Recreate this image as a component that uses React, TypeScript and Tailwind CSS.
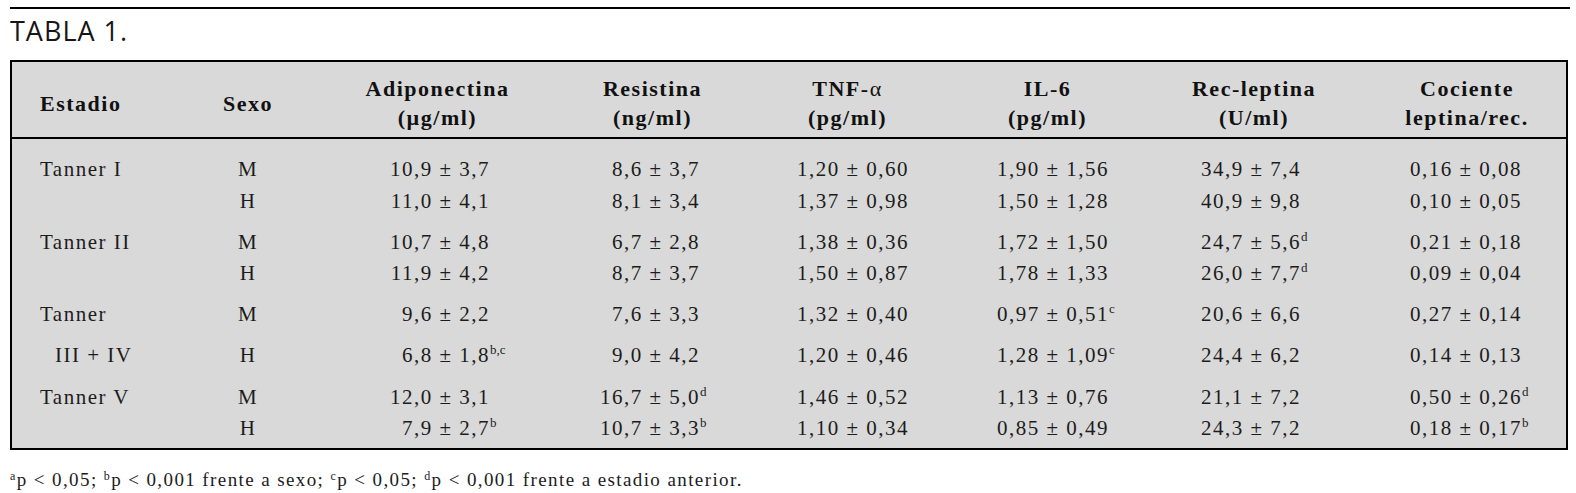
import React from "react";

type Val = { v: string; sup?: string };

const rows: {
  stage: string;
  indent?: boolean;
  sex: string;
  gap: string;
  vals: Val[];
}[] = [
  {
    stage: "Tanner I",
    sex: "M",
    gap: "mt-0",
    vals: [
      { v: "10,9 ± 3,7" },
      { v: "8,6 ± 3,7" },
      { v: "1,20 ± 0,60" },
      { v: "1,90 ± 1,56" },
      { v: "34,9 ± 7,4" },
      { v: "0,16 ± 0,08" },
    ],
  },
  {
    stage: "",
    sex: "H",
    gap: "mt-[1px]",
    vals: [
      { v: "11,0 ± 4,1" },
      { v: "8,1 ± 3,4" },
      { v: "1,37 ± 0,98" },
      { v: "1,50 ± 1,28" },
      { v: "40,9 ± 9,8" },
      { v: "0,10 ± 0,05" },
    ],
  },
  {
    stage: "Tanner II",
    sex: "M",
    gap: "mt-[10px]",
    vals: [
      { v: "10,7 ± 4,8" },
      { v: "6,7 ± 2,8" },
      { v: "1,38 ± 0,36" },
      { v: "1,72 ± 1,50" },
      { v: "24,7 ± 5,6", sup: "d" },
      { v: "0,21 ± 0,18" },
    ],
  },
  {
    stage: "",
    sex: "H",
    gap: "mt-0",
    vals: [
      { v: "11,9 ± 4,2" },
      { v: "8,7 ± 3,7" },
      { v: "1,50 ± 0,87" },
      { v: "1,78 ± 1,33" },
      { v: "26,0 ± 7,7", sup: "d" },
      { v: "0,09 ± 0,04" },
    ],
  },
  {
    stage: "Tanner",
    sex: "M",
    gap: "mt-[10px]",
    vals: [
      { v: "9,6 ± 2,2" },
      { v: "7,6 ± 3,3" },
      { v: "1,32 ± 0,40" },
      { v: "0,97 ± 0,51", sup: "c" },
      { v: "20,6 ± 6,6" },
      { v: "0,27 ± 0,14" },
    ],
  },
  {
    stage: "III + IV",
    indent: true,
    sex: "H",
    gap: "mt-[10px]",
    vals: [
      { v: "6,8 ± 1,8", sup: "b,c" },
      { v: "9,0 ± 4,2" },
      { v: "1,20 ± 0,46" },
      { v: "1,28 ± 1,09", sup: "c" },
      { v: "24,4 ± 6,2" },
      { v: "0,14 ± 0,13" },
    ],
  },
  {
    stage: "Tanner V",
    sex: "M",
    gap: "mt-[11px]",
    vals: [
      { v: "12,0 ± 3,1" },
      { v: "16,7 ± 5,0", sup: "d" },
      { v: "1,46 ± 0,52" },
      { v: "1,13 ± 0,76" },
      { v: "21,1 ± 7,2" },
      { v: "0,50 ± 0,26", sup: "d" },
    ],
  },
  {
    stage: "",
    sex: "H",
    gap: "mt-0",
    vals: [
      { v: "7,9 ± 2,7", sup: "b" },
      { v: "10,7 ± 3,3", sup: "b" },
      { v: "1,10 ± 0,34" },
      { v: "0,85 ± 0,49" },
      { v: "24,3 ± 7,2" },
      { v: "0,18 ± 0,17", sup: "b" },
    ],
  },
];

// right padding of each value column, so the values line up on the right
const valPad = ["pr-[55px]", "pr-[60px]", "pr-[26px]", "pr-[51px]", "pr-[47px]", "pr-[44px]"];

const heads: { l1: React.ReactNode; l2: React.ReactNode; cls: string }[] = [
  { l1: "Adiponectina", l2: "(µg/ml)", cls: "" },
  { l1: "Resistina", l2: "(ng/ml)", cls: "" },
  {
    l1: (
      <>
        TNF-<span className="font-normal">α</span>
      </>
    ),
    l2: "(pg/ml)",
    cls: "",
  },
  { l1: "IL-6", l2: "(pg/ml)", cls: "" },
  { l1: "Rec-leptina", l2: "(U/ml)", cls: "" },
  { l1: "Cociente", l2: "leptina/rec.", cls: "pl-[20px]" },
];

const grid =
  "grid grid-cols-[188px_130px_215px_215px_175px_225px_188px_218px]";

function Value({ val }: { val: Val }) {
  return (
    <span className="relative inline-block">
      {val.v}
      {val.sup && (
        <span className="absolute left-full top-[-6px] text-[13px] tracking-normal">
          {val.sup}
        </span>
      )}
    </span>
  );
}

export default function App() {
  return (
    <div className="w-[1576px] h-[493px] bg-white pt-[7px] pl-[10px] font-['Liberation_Serif',serif] text-[#1c1c1c]">
      <div className="w-[1560px] h-[2px] bg-black" />
      <div className="mt-[7px] mb-[14px] leading-[30px] text-[27px] tracking-[1px] font-['Open_Sans',sans-serif] text-[#161616]">
        TABLA 1.
      </div>

      <div className="w-[1558px] border-2 border-black bg-[#d9d9d9]">
        <div className={grid + " h-[77px] items-center pt-[7px] border-b-2 border-black font-bold text-[22px] leading-[29px] tracking-[1.5px] text-[#111]"}>
          <div className="pl-[28px]">Estadio</div>
          <div className="pl-[23px]">Sexo</div>
          {heads.map((h, i) => (
            <div key={i} className={"text-center " + h.cls}>
              <div>{h.l1}</div>
              <div>{h.l2}</div>
            </div>
          ))}
        </div>

        <div className="pt-[15px] pb-[4px] text-[21px] leading-[31px] tracking-[1.5px]">
          {rows.map((r, i) => (
            <div key={i} className={grid + " " + r.gap}>
              <div className={r.indent ? "pl-[43px]" : "pl-[28px]"}>{r.stage}</div>
              <div className="pr-[34px] text-center">{r.sex}</div>
              {r.vals.map((v, j) => (
                <div key={j} className={"text-right " + valPad[j]}>
                  <Value val={v} />
                </div>
              ))}
            </div>
          ))}
        </div>
      </div>

      <div className="mt-[20px] text-[19px] leading-[20px] tracking-[1.4px]">
        <sup className="text-[12px]">a</sup>p &lt; 0,05; <sup className="text-[12px]">b</sup>p &lt; 0,001 frente a sexo;{" "}
        <sup className="text-[12px]">c</sup>p &lt; 0,05; <sup className="text-[12px]">d</sup>p &lt; 0,001 frente a estadio anterior.
      </div>
    </div>
  );
}
